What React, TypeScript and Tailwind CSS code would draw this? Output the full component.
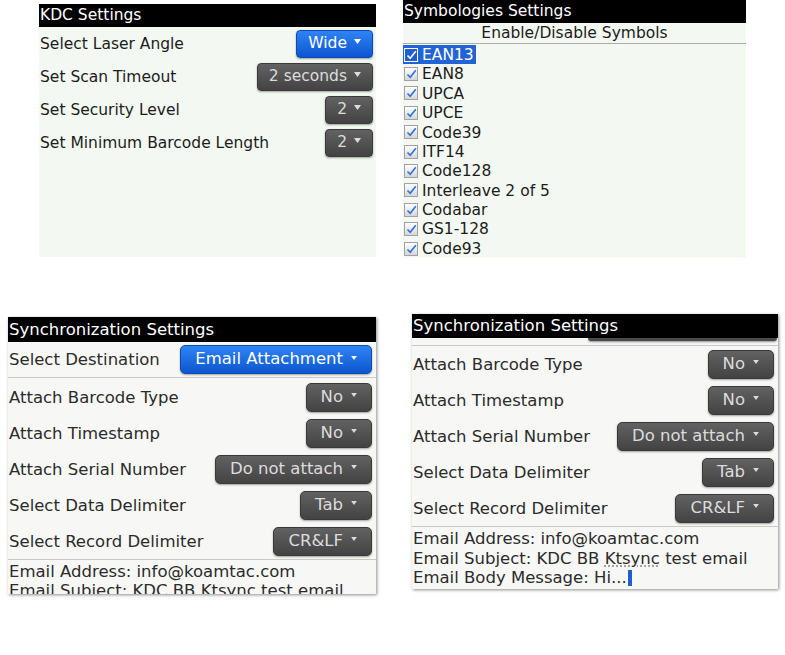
import React from "react";

const FONT = { fontFamily: '"DejaVu Sans", "Liberation Sans", sans-serif' };

const Caret: React.FC<{ w?: number }> = ({ w = 7 }) => (
  <svg width={w} height={Math.round(w * 0.7)} viewBox="0 0 10 7" className="-translate-y-[2px]">
    <path d="M0 0 L10 0 L5 7 Z" fill="currentColor" />
  </svg>
);

interface DropProps {
  value: string;
  blue?: boolean;
  big?: boolean;
}

const Drop: React.FC<DropProps> = ({ value, blue, big }) => {
  const tone = blue
    ? "bg-gradient-to-b from-[#2f84f5] to-[#0c55cf] border-[#0b4cb0] text-white"
    : "bg-gradient-to-b from-[#626262] to-[#434343] border-[#3a3a3a] text-[#dcdcdc]";
  const size = big
    ? "h-[29px] px-[14px] gap-[8px] text-[16.5px] rounded-[5px]"
    : "h-[28px] px-[11px] gap-[7px] text-[15.5px] rounded-[4px]";
  return (
    <div
      className={`flex items-center border shadow-[0_1px_2px_rgba(0,0,0,0.35)] leading-none ${tone} ${size}`}
    >
      <span>{value}</span>
      <Caret w={big ? 6 : 7} />
    </div>
  );
};

const Header: React.FC<{ title: string; h: string }> = ({ title, h }) => (
  <div className={`bg-black text-white pl-[1px] shrink-0 ${h}`}>{title}</div>
);

const Check: React.FC<{ active?: boolean }> = ({ active }) => (
  <div
    className={
      active
        ? "w-[14px] h-[14px] border border-white bg-[#1f5fd0] flex items-center justify-center"
        : "w-[14px] h-[14px] border border-[#a2a2a2] bg-gradient-to-b from-white to-[#d6d6d6] flex items-center justify-center"
    }
  >
    <svg width="11" height="10" viewBox="0 0 11 10">
      <path
        d="M1.5 5.5 L4.2 8.2 L9.8 1.2"
        fill="none"
        stroke={active ? "#ffffff" : "#2c73dc"}
        strokeWidth="1.6"
      />
    </svg>
  </div>
);

const kdcRows = [
  { label: "Select Laser Angle", value: "Wide", blue: true },
  { label: "Set Scan Timeout", value: "2 seconds" },
  { label: "Set Security Level", value: "2" },
  { label: "Set Minimum Barcode Length", value: "2" },
];

const symbols = [
  "EAN13",
  "EAN8",
  "UPCA",
  "UPCE",
  "Code39",
  "ITF14",
  "Code128",
  "Interleave 2 of 5",
  "Codabar",
  "GS1-128",
  "Code93",
];

const syncRows = [
  { label: "Attach Barcode Type", value: "No" },
  { label: "Attach Timestamp", value: "No" },
  { label: "Attach Serial Number", value: "Do not attach" },
  { label: "Select Data Delimiter", value: "Tab" },
  { label: "Select Record Delimiter", value: "CR&LF" },
];

const SyncRow: React.FC<{ label: string; value: string }> = ({ label, value }) => (
  <div className="h-[36px] flex items-center justify-between pl-[1px] pr-[4px] shrink-0">
    <span className="pt-[2px]">{label}</span>
    <Drop value={value} big />
  </div>
);

export default function App() {
  return (
    <div className="w-[785px] h-[655px] bg-white overflow-hidden text-[#1c1c1c]" style={FONT}>
      {/* top row */}
      <div className="flex items-start pl-[39px]">
        <div className="mt-[4px] w-[337px] h-[253px] bg-[#f3f8f2] flex flex-col">
          <Header title="KDC Settings" h="h-[23px] leading-[23px] text-[15.5px]" />
          {kdcRows.map((r) => (
            <div key={r.label} className="h-[33px] flex items-center justify-between pl-[1px] pr-[3px] text-[15.5px]">
              <span className="pt-[3px]">{r.label}</span>
              <Drop value={r.value} blue={r.blue} />
            </div>
          ))}
        </div>

        <div className="ml-[27px] w-[343px] h-[258px] bg-[#f3f8f2] flex flex-col">
          <Header title="Symbologies Settings" h="h-[23px] leading-[23px] text-[15.5px]" />
          <div className="h-[21px] leading-[21px] text-center text-[15.5px] border-b border-[#a9aca8] shrink-0">
            Enable/Disable Symbols
          </div>
          <div className="pt-[1px] flex flex-col">
            {symbols.map((s, i) => (
              <div key={s} className="h-[19.4px] flex items-center text-[15.5px] leading-none">
                <div
                  className={
                    i === 0
                      ? "flex items-center h-full gap-[4px] pl-[1px] pr-[2px] bg-[#2264d6] text-white"
                      : "flex items-center h-full gap-[4px] pl-[1px]"
                  }
                >
                  <Check active={i === 0} />
                  <span className="pt-[2px]">{s}</span>
                </div>
              </div>
            ))}
          </div>
        </div>
      </div>

      {/* bottom row */}
      <div className="flex items-start mt-[55px] text-[16.5px] text-[#2b2b2b]">
        <div className="ml-[8px] mt-[4px] w-[368px] h-[277px] bg-[#f7f8f5] overflow-hidden flex flex-col shadow-[1px_1px_3px_rgba(0,0,0,0.45)]">
          <Header title="Synchronization Settings" h="h-[25px] leading-[25px] text-[16.5px]" />
          <div className="h-[36px] flex items-center justify-between pl-[1px] pr-[4px] border-b border-[#c9cac6] shrink-0">
            <span className="pt-[2px]">Select Destination</span>
            <Drop value="Email Attachment" blue big />
          </div>
          <div className="pt-[1px] flex flex-col shrink-0">
            {syncRows.map((r) => (
              <SyncRow key={r.label} {...r} />
            ))}
          </div>
          <div className="border-t border-[#c9cac6] pt-[2px] pl-[1px] leading-[19px] shrink-0">
            <div>Email Address: info@koamtac.com</div>
            <div>Email Subject: KDC BB Ktsync test email</div>
          </div>
        </div>

        <div className="ml-[36px] mt-[1px] w-[366px] bg-[#f7f8f5] flex flex-col shadow-[1px_1px_3px_rgba(0,0,0,0.45)]">
          <Header title="Synchronization Settings" h="h-[24px] leading-[24px] text-[16.5px]" />
          <div className="h-[8px] flex justify-end pr-[1px] border-b border-[#c9cac6] shrink-0">
            <div className="w-[189px] h-[3px] bg-[#4a4a4a] rounded-b-[4px] shadow-[0_1px_2px_rgba(0,0,0,0.4)]" />
          </div>
          {syncRows.map((r) => (
            <SyncRow key={r.label} {...r} />
          ))}
          <div className="border-t border-[#c9cac6] pt-[2px] pl-[1px] leading-[19.5px] pb-[1px]">
            <div>Email Address: info@koamtac.com</div>
            <div>
              Email Subject: KDC BB{" "}
              <span className="underline decoration-dotted decoration-[#888] underline-offset-2">Ktsync</span> test email
            </div>
            <div className="flex items-center">
              Email Body Message: Hi...
              <span className="inline-block w-[4px] h-[16px] bg-[#1f5fd0] ml-[1px]" />
            </div>
          </div>
        </div>
      </div>
    </div>
  );
}
